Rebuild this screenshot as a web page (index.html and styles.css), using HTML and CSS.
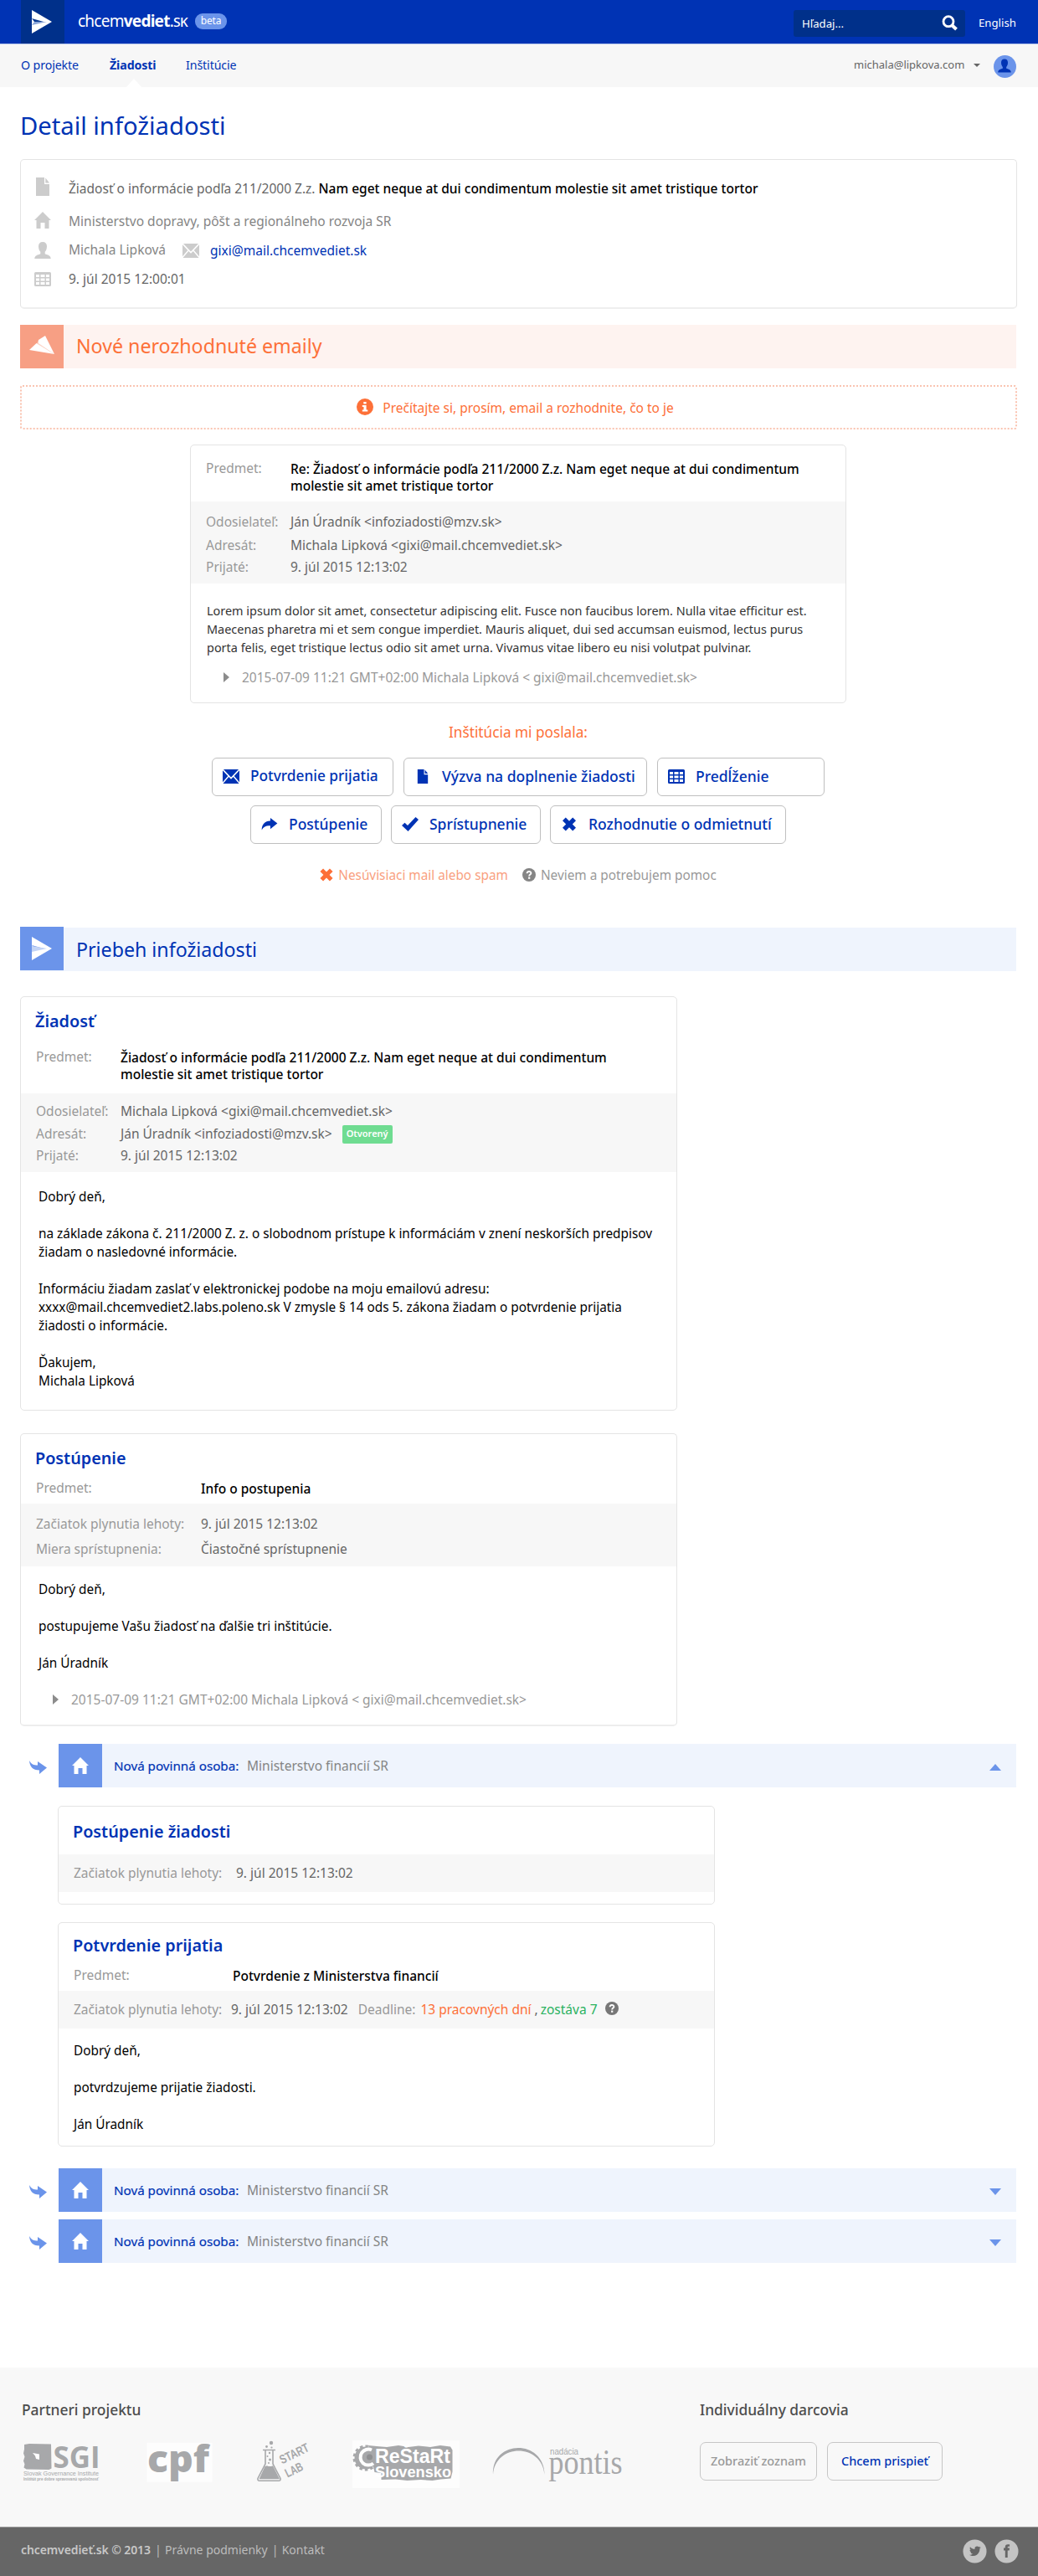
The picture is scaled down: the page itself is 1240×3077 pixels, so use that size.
FILE: index.html
```html
<!DOCTYPE html>
<html lang="sk">
<head>
<meta charset="utf-8">
<title>Detail infožiadosti – chcemvediet.sk</title>
<link rel="stylesheet" href="styles.css">
</head>
<body>
<svg class="sprite" aria-hidden="true">
  <symbol id="i-doc" viewBox="0 0 20 22"><path d="M2 0h10v8h6v14H2zM13.300 0.500L18 6.500h-4.700z"/></symbol>
  <symbol id="i-home" viewBox="0 0 20 20"><path d="M10 0l10 10h-2.500v10h-5v-7h-5v7h-5V10H0z"/></symbol>
  <symbol id="i-user" viewBox="0 0 20 20"><path d="M10 0c3.200 0 5 2 5 5.200 0 3-1 5.200-2.300 6.600v2.400c3.300 1.300 7 1.800 7 5.800H0.300c0-4 3.700-4.500 7-5.800v-2.400C6 10.400 5 8.200 5 5.200 5 2 6.800 0 10 0z"/></symbol>
  <symbol id="i-grid" viewBox="0 0 20 17"><path fill-rule="evenodd" d="M1.500 0h17Q20 0 20 1.500v14q0 1.500-1.500 1.500h-17Q0 17 0 15.500v-14Q0 0 1.500 0zM2 3v3h4V3zm5.500 0v3h5V3zM14 3v3h4V3zM2 7.500v3h4v-3zm5.500 0v3h5v-3zm6.500 0v3h4v-3zM2 12v3h4v-3zm5.500 0v3h5v-3zm6.500 0v3h4v-3z"/></symbol>
  <symbol id="i-mail" viewBox="0 0 20 17"><path d="M1 0h18l-9 9.500zM0 1.300l6.300 6.700L0 15.200zM20 1.300v13.900L13.700 8zM7.300 9l2.700 2.700L12.700 9 19.500 17H0.500z"/></symbol>
  <symbol id="i-share" viewBox="0 0 20 16"><path d="M11 0l9 7-9 7v-4C6 9.600 2.600 11 0 15.500 0.300 8 4 4 11 3.800z"/></symbol>
  <symbol id="i-check" viewBox="0 0 20 17"><path d="M0 10l3.500-3.200L7 10 16.500 0 20 3 7.500 17z"/></symbol>
  <symbol id="i-cross" viewBox="0 0 17 17"><path d="M4.300 0.500l4.200 4.200L12.700 0.500 16.500 4.300 12.300 8.500l4.200 4.200-3.800 3.800-4.200-4.200-4.200 4.200L0.500 12.700 4.700 8.500 0.500 4.300z"/></symbol>
  <symbol id="i-help" viewBox="0 0 16 16"><circle cx="8" cy="8" r="8"/><path class="knock-line" d="M5.600 6.300c0-3 4.800-3 4.800-.4C10.400 7.600 8.200 7.600 8.200 9.400"/><rect class="knock" x="7.100" y="10.600" width="2.200" height="2.200"/></symbol>
  <symbol id="i-info" viewBox="0 0 20 20"><circle cx="10" cy="10" r="10"/><path class="knock" d="M8.300 4h3.300v2.600H8.300zM6.800 8h4.800v5.500h1.700v2H6.800v-2h1.700V10H6.800z"/></symbol>
  <symbol id="i-down" viewBox="0 0 21 16"><path d="M0 0c2.600 4.500 5 5.500 10 5.600V1l11 7.500L12 16v-4.500C4 11.500 0.500 7 0 0z"/></symbol>
</svg>

<header class="topbar">
  <div class="logo"><svg width="24" height="28" viewBox="0 0 24 28"><path fill="#fff" d="M0 0l24 14L0 28v-9z"/><path fill="#0a3a91" d="M0 10l14 4H3z"/><path fill="#8ba6d8" d="M3 14h15L0 18z"/></svg></div>
  <div class="brand">chcem<b>vediet</b>.<span>sk</span></div>
  <div class="beta">beta</div>
  <div class="search"><span>Hľadaj...</span><svg width="20" height="19" viewBox="0 0 20 19"><circle cx="8" cy="7.700" r="6" fill="none" stroke="#fff" stroke-width="2.800"/><path d="M12 12l5.500 5" stroke="#fff" stroke-width="4"/></svg></div>
  <a class="lang">English</a>
</header>
<nav class="nav">
  <a>O projekte</a><a class="active">Žiadosti</a><a>Inštitúcie</a>
  <span class="account">michala@lipkova.com</span><i class="tri-s"></i>
  <span class="avatar"><svg width="16" height="17"><use href="#i-user"/></svg></span>
</nav>

<main>
  <h1>Detail infožiadosti</h1>
  <section class="box summary">
    <svg class="ic-doc"><use href="#i-doc"/></svg><div>Žiadosť o informácie podľa 211/2000 Z.z. <b>Nam eget neque at dui condimentum molestie sit amet tristique tortor</b></div>
    <svg class="ic-home"><use href="#i-home"/></svg><div class="soft">Ministerstvo dopravy, pôšt a regionálneho rozvoja SR</div>
    <svg class="ic-user"><use href="#i-user"/></svg><div class="soft who">Michala Lipková<svg class="ic-mail"><use href="#i-mail"/></svg><a>gixi@mail.chcemvediet.sk</a></div>
    <svg class="ic-grid"><use href="#i-grid"/></svg><div>9. júl 2015 12:00:01</div>
  </section>

  <h2 class="bar orange"><span class="tile"><svg width="30" height="22" viewBox="0 0 30 22"><path fill="#fbd3c6" d="M9 9.500l2-4.500 19 17z"/><path fill="#fff" d="M0 17l8.500-8L30 22z"/><path fill="#fff" d="M11 5l8-5 11 22-19-13z"/></svg></span>Nové nerozhodnuté emaily</h2>
  <div class="notice"><svg width="20" height="20"><use href="#i-info"/></svg>Prečítajte si, prosím, email a rozhodnite, čo to je</div>

  <article class="box mail incoming">
    <div class="subj"><span>Predmet:</span><b>Re: Žiadosť o informácie podľa 211/2000 Z.z. Nam eget neque at dui condimentum<br>molestie sit amet tristique tortor</b></div>
    <div class="meta"><span>Odosielateľ:</span><div>Ján Úradník &lt;infoziadosti@mzv.sk&gt;</div><span>Adresát:</span><div>Michala Lipková &lt;gixi@mail.chcemvediet.sk&gt;</div><span>Prijaté:</span><div>9. júl 2015 12:13:02</div></div>
    <div class="body"><p>Lorem ipsum dolor sit amet, consectetur adipiscing elit. Fusce non faucibus lorem. Nulla vitae efficitur est.<br>Maecenas pharetra mi et sem congue imperdiet. Mauris aliquet, dui sed accumsan euismod, lectus purus<br>porta felis, eget tristique lectus odio sit amet urna. Vivamus vitae libero eu nisi volutpat pulvinar.</p>
    <div class="quote">2015-07-09 11:21 GMT+02:00 Michala Lipková &lt; gixi@mail.chcemvediet.sk&gt;</div></div>
  </article>

  <p class="ask">Inštitúcia mi poslala:</p>
  <div class="choices">
    <div class="row r1">
      <a class="btn w1"><svg height="17"><use href="#i-mail"/></svg>Potvrdenie prijatia</a>
      <a class="btn w2"><svg height="17"><use href="#i-doc"/></svg>Výzva na doplnenie žiadosti</a>
      <a class="btn w3"><svg height="17"><use href="#i-grid"/></svg>Predĺženie</a>
    </div>
    <div class="row">
      <a class="btn w4"><svg height="15"><use href="#i-share"/></svg>Postúpenie</a>
      <a class="btn w5"><svg height="17"><use href="#i-check"/></svg>Sprístupnenie</a>
      <a class="btn w6"><svg height="17"><use href="#i-cross"/></svg>Rozhodnutie o odmietnutí</a>
    </div>
  </div>
  <div class="others"><a class="spam"><svg width="16" height="16"><use href="#i-cross"/></svg>Nesúvisiaci mail alebo spam</a><a><svg width="16" height="16"><use href="#i-help"/></svg>Neviem a potrebujem pomoc</a></div>

  <h2 class="bar blue"><span class="tile"><svg width="24" height="28" viewBox="0 0 24 28"><path fill="#fff" d="M0 0l24 14L0 28v-9z"/><path fill="#6b94ea" d="M0 10l14 4H3z"/><path fill="#c3d4f6" d="M0 11l18 3L0 18z"/></svg></span>Priebeh infožiadosti</h2>

  <article class="box mail request">
    <h3>Žiadosť</h3>
    <div class="subj"><span>Predmet:</span><b>Žiadosť o informácie podľa 211/2000 Z.z. Nam eget neque at dui condimentum<br>molestie sit amet tristique tortor</b></div>
    <div class="meta"><span>Odosielateľ:</span><div>Michala Lipková &lt;gixi@mail.chcemvediet.sk&gt;</div><span>Adresát:</span><div class="flex">Ján Úradník &lt;infoziadosti@mzv.sk&gt;<em class="badge">Otvorený</em></div><span>Prijaté:</span><div>9. júl 2015 12:13:02</div></div>
    <div class="body"><p>Dobrý deň,</p><p>na základe zákona č. 211/2000 Z. z. o slobodnom prístupe k informáciám v znení neskorších predpisov<br>žiadam o nasledovné informácie.</p><p>Informáciu žiadam zaslať v elektronickej podobe na moju emailovú adresu:<br>xxxx@mail.chcemvediet2.labs.poleno.sk V zmysle § 14 ods 5. zákona žiadam o potvrdenie prijatia<br>žiadosti o informácie.</p><p>Ďakujem,<br>Michala Lipková</p></div>
  </article>

  <article class="box mail advance">
    <h3>Postúpenie</h3>
    <div class="subj"><span>Predmet:</span><b>Info o postupenia</b></div>
    <div class="meta"><span>Začiatok plynutia lehoty:</span><div>9. júl 2015 12:13:02</div><span>Miera sprístupnenia:</span><div>Čiastočné sprístupnenie</div></div>
    <div class="body"><p>Dobrý deň,</p><p>postupujeme Vašu žiadosť na ďalšie tri inštitúcie.</p><p>Ján Úradník</p>
    <div class="quote">2015-07-09 11:21 GMT+02:00 Michala Lipková &lt; gixi@mail.chcemvediet.sk&gt;</div></div>
  </article>

  <div class="branch"><svg class="turn"><use href="#i-down"/></svg><span class="tile"><svg width="20" height="20"><use href="#i-home"/></svg></span><div class="strip"><b>Nová povinná osoba:</b><span>Ministerstvo financií SR</span><i class="tri up"></i></div></div>

  <div class="nested">
    <article class="box mail forwarded">
      <h3>Postúpenie žiadosti</h3>
      <div class="meta"><span>Začiatok plynutia lehoty:</span><div>9. júl 2015 12:13:02</div></div>
    </article>
    <article class="box mail confirmed">
      <h3>Potvrdenie prijatia</h3>
      <div class="subj"><span>Predmet:</span><b>Potvrdenie z Ministerstva financií</b></div>
      <div class="meta"><span>Začiatok plynutia lehoty:</span><div class="flex">9. júl 2015 12:13:02<span class="dl">Deadline:</span><span class="late">13 pracovných dní</span><span class="comma">,</span><span class="left">zostáva 7</span><svg width="16" height="16"><use href="#i-help"/></svg></div></div>
      <div class="body"><p>Dobrý deň,</p><p>potvrdzujeme prijatie žiadosti.</p><p>Ján Úradník</p></div>
    </article>
  </div>

  <div class="branch b2"><svg class="turn"><use href="#i-down"/></svg><span class="tile"><svg width="20" height="20"><use href="#i-home"/></svg></span><div class="strip"><b>Nová povinná osoba:</b><span>Ministerstvo financií SR</span><i class="tri"></i></div></div>
  <div class="branch b3"><svg class="turn"><use href="#i-down"/></svg><span class="tile"><svg width="20" height="20"><use href="#i-home"/></svg></span><div class="strip"><b>Nová povinná osoba:</b><span>Ministerstvo financií SR</span><i class="tri"></i></div></div>
</main>

<footer>
  <div class="partners">
    <div class="logos-col">
      <h4>Partneri projektu</h4>
      <div class="logos">
        <svg class="lg sgi" viewBox="26 2912 96 62"><path d="M29 2920l6-1 26 .5 .5 29-3 1.500-27-.5-3-2 1-4-1.500-4 1.500-5-1.500-4 1-5z"/><path fill="#fff" d="M39 2930l8 1.500v6.500l-4-1-1-3.500z"/><text x="63.500" y="2948" class="t-sgi" textLength="56" lengthAdjust="spacingAndGlyphs">SGI</text><text x="28" y="2957" font-size="8" textLength="90" lengthAdjust="spacingAndGlyphs">Slovak Governance Institute</text><text x="28" y="2962.500" font-size="5.500" font-weight="bold" textLength="90" lengthAdjust="spacingAndGlyphs">Inštitút pre dobre spravovanú spoločnosť</text></svg>
        <svg class="lg cpf" viewBox="175 2912 80 62"><path fill="#fdfdfd" d="M175.500 2918h78v46.500h-78z"/><text x="176" y="2952.500" class="t-cpf" textLength="74" lengthAdjust="spacingAndGlyphs">cpf</text></svg>
        <svg class="lg start" viewBox="304 2912 68 62"><path d="M314 2926.500h15M317 2927v16l-9 17.500q-.5 2.800 2 2.800h23q2.500 0 2-2.800l-9-17.500v-16" fill="none" stroke="#a7a8aa" stroke-width="1.600"/><path d="M316.500 2946l2.500-.8q3 1.800 7 0l8 16h-24.500z"/><circle cx="324" cy="2918" r="2.200"/><circle cx="318.500" cy="2922.500" r="1.400"/><circle cx="324.500" cy="2923.500" r="1.100"/><circle cx="322" cy="2930" r="1.200"/><circle cx="319.500" cy="2934" r="1"/><circle cx="322.500" cy="2938" r="1.500"/><circle cx="321" cy="2942" r="1"/><text class="t-lab" transform="translate(337 2943.500) rotate(-26)" textLength="37" lengthAdjust="spacingAndGlyphs">START</text><text class="t-lab" transform="translate(343.500 2959.500) rotate(-26)" textLength="22" lengthAdjust="spacingAndGlyphs">LAB</text></svg>
        <svg class="lg restart" viewBox="421 2912 129 62"><path fill="#fdfdfd" d="M421 2915h128v57H421z"/><path d="M440 2921l10 1 12 1 14-2 12 2 12-1.500 14 1.500 12-2 12 1.500 2.500 4v26l-2 8-12 1-10 1.500-14-1-16 1-14-1.500-17 .5v-8l-8-1z"/><circle cx="437" cy="2936" r="13.500"/><circle cx="437" cy="2936" r="14" fill="none" stroke="#a7a8aa" stroke-width="3" stroke-dasharray="3.500 3"/><path d="M444 2926.500a9.500 9.500 0 1 0 2 16" fill="none" stroke="#fff" stroke-width="4"/><circle cx="441.500" cy="2935" r="3.500" fill="#8f9092"/><text x="448" y="2942" class="t-re" textLength="90" lengthAdjust="spacingAndGlyphs">ReŠtaRt</text><text x="448" y="2958.500" class="t-slo" textLength="91" lengthAdjust="spacingAndGlyphs">Slovensko</text></svg>
        <svg class="lg pontis" viewBox="588 2912 160 62"><path d="M589 2956c-2-42 61-43 61.500 0-3-38-59-38-61.500 0z"/><text x="657" y="2932" font-size="10" textLength="34" lengthAdjust="spacingAndGlyphs">nadácia</text><text x="655.500" y="2954.500" class="t-pon" textLength="88" lengthAdjust="spacingAndGlyphs">pontis</text></svg>
      </div>
    </div>
    <div class="donors">
      <h4>Individuálny darcovia</h4>
      <div class="row"><a class="fbtn list">Zobraziť zoznam</a><a class="fbtn give">Chcem prispieť</a></div>
    </div>
  </div>
  <div class="legal">
    <b>chcemvedieť.sk © 2013</b><i>|</i><a>Právne podmienky</a><i>|</i><a class="kontakt">Kontakt</a>
    <svg class="soc tw" width="29" height="29" viewBox="0 0 29 29"><circle cx="14.500" cy="14.500" r="14" fill="#c4c4c4"/><path fill="#666" d="M22 9.800l-1.600 1.500c.3 5-3.400 8.700-7.900 8.700-1.800 0-3.200-.4-4.500-1.200 1.700.1 2.900-.3 4-1.200-1.300-.1-2.200-.8-2.600-2h1.100c-1.300-.5-2-1.500-2-2.900l1.200.3c-1.100-1-1.400-2.400-.7-3.800 1.500 1.800 3.300 2.700 5.500 2.800-.4-2.200.8-3.500 2.700-3.500.8 0 1.500.3 2 .8l1.800-.6-.9 1.500z"/></svg>
    <svg class="soc" width="29" height="29" viewBox="0 0 29 29"><circle cx="14.500" cy="14.500" r="14" fill="#c4c4c4"/><path fill="#666" d="M12.800 22v-8.600H11v-2.800h1.800V9.500c0-2.400 1.200-3.500 3.700-3.300h1.600v2.600h-1.200c-.9 0-1.200.3-1.200 1v.8H18l-.3 2.800h-2V22z"/></svg>
  </div>
</footer>
</body>
</html>
```
FILE: styles.css
```css
* { box-sizing: border-box; margin: 0; padding: 0; }
body { width: 1240px; background: #fff; color: #666; font: 15.5px/22px "Noto Sans", sans-serif; white-space: nowrap; }
svg { fill: currentColor; flex: none; display: block; }
.sprite { position: absolute; width: 0; height: 0; }
.knock { fill: #fff; }
.knock-line { fill: none; stroke: #fff; stroke-width: 1.9; }
i { font-style: normal; }
b { font-weight: 500; }

/* header */
.topbar { display: flex; align-items: flex-start; height: 53px; padding-left: 25px; background: #0033b4; border-bottom: 1px solid #b6c4ea; color: #fff; }
.logo { width: 52px; height: 52px; padding: 12px 0 0 13px; background: #00308a; }
.brand { width: 140px; margin-left: 16px; font-size: 19px; line-height: 50px; letter-spacing: -0.75px; }
.brand b { font-weight: 700; }
.brand span { font-variant: small-caps; }
.beta { width: 38px; height: 19px; margin-top: 16px; border-radius: 9px; background: #6b94ea; font-size: 12px; line-height: 18px; letter-spacing: -0.2px; text-align: center; }
.search { display: flex; justify-content: space-between; width: 205px; height: 32px; margin: 12px 0 0 677px; padding: 6px 8px 0 10px; border-radius: 3px; background: #00308a; font-size: 13.2px; line-height: 20px; }
.lang { margin: 17px 0 0 16px; font-size: 13.2px; line-height: 20px; }

.nav { display: flex; height: 51px; padding-left: 25px; background: #f7f7f7; color: #0033b4; font-size: 14.2px; line-height: 49px; }
.nav a { width: 91px; letter-spacing: -0.1px; }
.nav a:first-child { width: 106px; }
.nav .active { position: relative; font-weight: 700; }
.nav .active::after { content: ""; position: absolute; left: 20px; bottom: 0; border: 9px solid transparent; border-top: 0; border-bottom: 10px solid #fff; }
.account { margin-left: 707px; width: 143px; color: #666; font-size: 13px; }
.tri-s { height: 0; margin-top: 23px; border: 4px solid transparent; border-top-color: #666; border-bottom: 0; }
.avatar { width: 27px; height: 27px; margin: 13px 0 0 16px; padding: 4px 5px; border-radius: 50%; background: #6b94ea; color: #0033b4; }

main { padding: 26px 25px 125px 24px; }
h1 { color: #0033b4; font-size: 29.2px; line-height: 40px; font-weight: 400; }

.box { border: 1px solid #e4e4e4; border-radius: 5px; background: #fff; }
.summary { display: grid; grid-template: 39px 34px 35px 22px / 41px auto; height: 179px; margin-top: 20px; padding: 23px 0 0 16px; border-bottom-width: 2px; border-bottom-color: #eee; }
.summary svg { color: #ccc; width: 20px; height: 20px; }
.summary b { color: #000; }
.summary .ic-doc { height: 22px; margin-top: -2px; }
.summary .ic-user { margin-top: 2px; }
.summary .ic-grid { height: 17px; margin-top: 3px; }
.summary .ic-mail { height: 17px; margin: 4px 13px 0 20px; }
.soft { color: #858585; }
.who { display: flex; }
.who a { padding-top: 1px; color: #0033b4; }

.bar { display: flex; height: 52px; margin: 19px 1px 0 0; font-size: 23.2px; line-height: 50px; font-weight: 400; }
.tile { display: flex; align-items: center; justify-content: center; flex: none; width: 52px; height: 52px; color: #fff; background: #6b94ea; }
.bar .tile { margin-right: 15px; }
.bar.orange { background: #fef3f0; color: #fd7038; }
.bar.orange .tile { background: #f79f84; padding-bottom: 4px; }
.bar.blue { margin-top: 52px; background: #eff4fd; color: #0033b4; line-height: 53px; }
.bar.blue .tile { margin-top: -1px; }

.notice { display: flex; gap: 11px; justify-content: center; height: 53px; margin-top: 20px; padding: 14px 8px 0 0; border: 2px dotted #fac4b1; border-radius: 3px; color: #fd7038; }

/* message cards */
.mail { width: 785px; }
.mail h3 { margin-left: 17px; color: #0033b4; font-size: 19.8px; line-height: 28px; font-weight: 600; }
.subj { display: grid; grid-template-columns: 101px auto; justify-content: start; padding: 0 0 0 18px; line-height: 20px; }
.subj span { margin-top: -1px; }
.subj span, .meta > span, .dl { color: #999; }
.subj b { color: #000; font-size: 15.5px; }
.meta { display: grid; grid-template-columns: 101px auto; justify-content: start; padding-left: 18px; background: #f7f7f7; }
.flex { display: flex; }
.body { padding-left: 21px; color: #000; font-size: 15.35px; }
.body p + p { margin-top: 22px; }
.quote { display: flex; align-items: center; margin: 22px 0 0 17px; color: #999; font-size: 15.5px; }
.quote::before { content: ""; width: 0; margin-right: 15px; border: 6px solid transparent; border-left: 7px solid #8c8c8c; border-right: 0; }

.incoming { width: 784px; height: 309px; margin: 18px 0 0 203px; padding-top: 18px; }
.incoming .subj { padding-bottom: 9px; }
.incoming .meta { grid-template-rows: 28px 26px 22px; padding-top: 13px; padding-bottom: 9px; }
.incoming .body { padding: 22px 0 0 19px; color: #333; font-size: 14.45px; }
.incoming .quote { margin: 13px 0 0 20px; }

.ask { margin-top: 24px; color: #fd7038; font-size: 17.2px; text-align: center; padding-right: 1px; }
.choices { display: flex; flex-direction: column; gap: 11px; margin-top: 19px; }
.row { display: flex; justify-content: center; gap: 11px; padding-right: 1px; }
.r1 { gap: 12px; }
.btn { display: flex; height: 46px; padding: 0 0 2px 12px; align-items: center; border: 1px solid #bfbfbf; border-radius: 6px; color: #0033b4; font-size: 17.5px; line-height: 42px; font-weight: 500; }
.btn svg { width: 20px; margin-right: 13px; }
.w1 { width: 217px; font-size: 17.3px; } .w2 { width: 291px; } .w3 { width: 200px; } .w4 { width: 157px; } .w5 { width: 179px; } .w6 { width: 282px; }
.others { display: flex; justify-content: center; gap: 17px; margin-top: 26px; padding-right: 1px; color: #8c8c8c; font-size: 15.35px; }
.others a { display: flex; gap: 6px; color: #999; }
.others svg { margin-top: 3px; color: #858585; }
.others .spam { color: #f99f80; }
.others .spam svg { color: #fd7038; }

.request { height: 495px; margin-top: 30px; padding-top: 15px; }
.request .subj { margin-top: 19px; padding-bottom: 13px; }
.request .meta { grid-template-rows: 27px 26px 22px; padding-top: 10px; padding-bottom: 9px; }
.request .body { padding-top: 18px; }
.badge { width: 60px; height: 22px; margin: 1px 0 0 12px; border-radius: 2px; background: #6fdc91; color: #fff; font: 600 11px/19px "Noto Sans", sans-serif; text-align: center; }

.advance { height: 350px; margin-top: 27px; padding-top: 15px; border-bottom-width: 2px; border-bottom-color: #ededed; }
.advance .subj, .advance .meta { grid-template-columns: 197px auto; }
.advance .subj, .confirmed .subj { margin-top: 12px; padding-bottom: 8px; }
.advance .meta { grid-template-rows: 30px 22px; padding-top: 13px; padding-bottom: 10px; }
.advance .body { padding-top: 16px; }

.branch { display: flex; height: 52px; margin: 21px 1px 0 11px; }
.turn { width: 21px; height: 16px; margin: 20px 14px 0 0; color: #6b94ea; }
.branch .tile { padding-bottom: 0; }
.strip { display: flex; flex: 1; padding-left: 14px; background: #eff4fd; line-height: 52px; color: #858585; }
.strip b { width: 159px; color: #0033b4; font-size: 15.2px; font-weight: 400; -webkit-text-stroke: 0.2px #0033b4; }
.tri { height: 0; margin: 24px 18px 0 auto; border: 7.5px solid transparent; border-top: 8px solid #6b94ea; border-bottom: 0; }
.tri.up { border-top: 0; border-bottom: 8px solid #6b94ea; }
.b2 { margin-top: 26px; }
.b3 { margin-top: 9px; }

.nested { margin-left: 45px; }
.forwarded { height: 118px; margin-top: 22px; padding-top: 16px; }
.forwarded .meta { grid-template-columns: 194px auto; margin-top: 13px; padding-top: 11px; padding-bottom: 12px; }
.confirmed { height: 268px; margin-top: 21px; padding-top: 13px; }
.confirmed .subj { grid-template-columns: 190px auto; }
.confirmed .meta { grid-template-columns: 188px auto; padding-top: 11px; padding-bottom: 12px; }
.confirmed .body { padding: 15px 0 0 18px; }
.dl { margin: 0 6px 0 12px; }
.late { color: #fd7038; }
.comma { margin: 0 3px 0 4px; }
.left { color: #2bb261; }
.confirmed svg { margin: 2px 0 0 9px; color: #777; }

/* footer */
.partners { display: flex; height: 190px; padding: 38px 0 0 26px; background: #f8f8f8; }
.logos-col { width: 810px; }
h4 { color: #4d4d4d; font-size: 17.4px; line-height: 24px; font-weight: 500; }
.logos { display: flex; margin-top: 22px; }
.lg { height: 62px; color: #a7a8aa; font-family: "Liberation Sans", sans-serif; overflow: visible; }
.sgi { width: 96px; }
.cpf { width: 80px; margin-left: 53px; }
.start { width: 68px; margin-left: 49px; }
.restart { width: 129px; margin-left: 49px; }
.pontis { width: 160px; margin-left: 38px; }
.t-sgi { font: 700 36px "Open Sans", sans-serif; }
.t-cpf { font: 800 44px "Open Sans", sans-serif; }
.t-lab { font: 700 15px "Liberation Sans", sans-serif; }
.t-re { font: 700 23px "Liberation Sans", sans-serif; fill: #fff; }
.t-slo { font: 700 17.5px "Liberation Sans", sans-serif; fill: #fff; }
.t-pon { font: 400 42px "Liberation Serif", serif; }
.donors .row { justify-content: flex-start; gap: 12px; margin-top: 27px; }
.fbtn { width: 140px; height: 46px; border: 1px solid #c6c6c6; border-radius: 7px; color: #999; font-size: 14.5px; line-height: 42px; font-weight: 500; text-align: center; }
.give { width: 138px; color: #0033b4; }
.legal { display: flex; height: 59px; padding-left: 25px; border-top: 1px solid #a5a5a5; background: #666; color: #bdbdbd; font-size: 14px; line-height: 54px; }
.legal i { width: 17px; padding-left: 5px; }
.legal b { width: 155px; color: #c8c8c8; font-weight: 600; letter-spacing: -0.1px; }
.legal .kontakt { width: 53px; }
.soc { margin: 14px 0 0 9px; }
.soc.tw { margin-left: auto; }
.soc:last-child { margin-right: 23px; }
```
